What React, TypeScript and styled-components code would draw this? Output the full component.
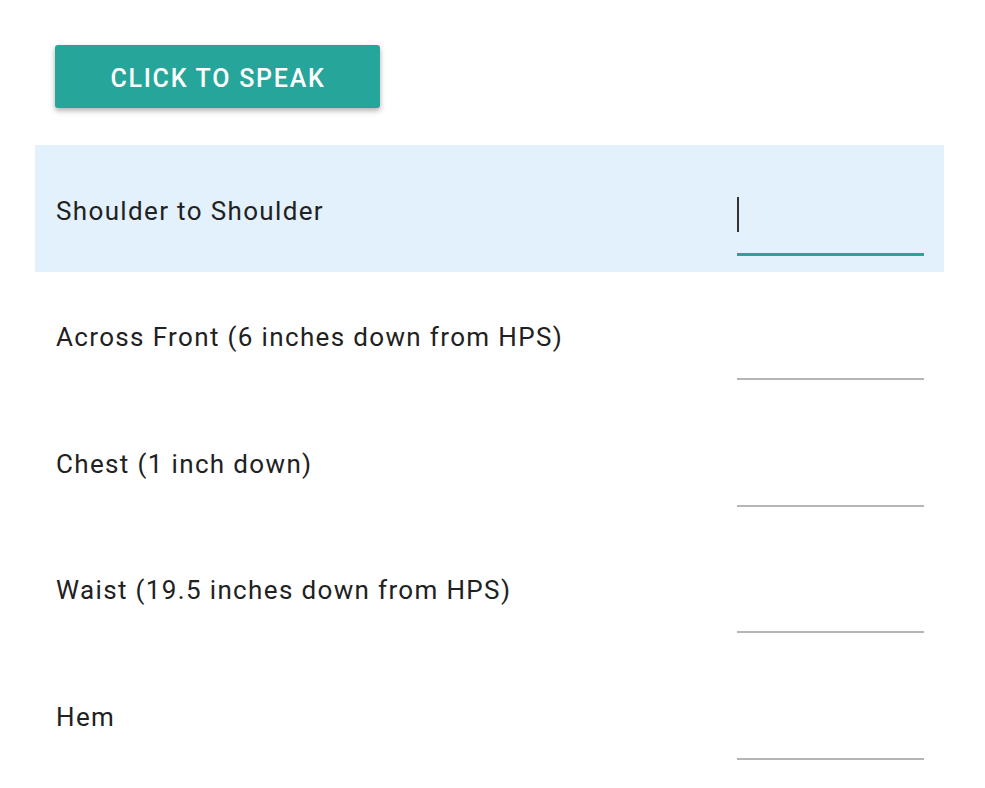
import styled, { createGlobalStyle } from "styled-components";

const GlobalStyle = createGlobalStyle`
  html, body {
    margin: 0;
    padding: 0;
    background: #ffffff;
    font-family: Roboto, "Noto Sans", sans-serif;
  }
`;

const measurements = [
  { label: "Shoulder to Shoulder", active: true },
  { label: "Across Front (6 inches down from HPS)", active: false },
  { label: "Chest (1 inch down)", active: false },
  { label: "Waist (19.5 inches down from HPS)", active: false },
  { label: "Hem", active: false },
];

const App = () => {
  return (
    <>
      <GlobalStyle />
      <Page>
        <Toolbar>
          <SpeakButton>Click to speak</SpeakButton>
        </Toolbar>
        <List>
          {measurements.map((m) => (
            <Row key={m.label} $active={m.active}>
              <Label>{m.label}</Label>
              <Field $active={m.active}>{m.active && <Caret />}</Field>
            </Row>
          ))}
        </List>
      </Page>
    </>
  );
};

export default App;

const Page = styled.div`
  padding: 45px 41px 0 35px;
  width: 909px;
`;

const Toolbar = styled.div`
  display: flex;
  padding-left: 20px;
  margin-bottom: 37px;
`;

const SpeakButton = styled.button`
  width: 325px;
  height: 63px;
  padding: 4px 0 0 1px;
  border: none;
  border-radius: 3px;
  background-color: #26a69a;
  color: #ffffff;
  font-family: Roboto, sans-serif;
  font-size: 25px;
  font-weight: 500;
  letter-spacing: 1.75px;
  text-transform: uppercase;
  box-shadow: 0 3px 6px rgba(0, 0, 0, 0.22), 0 2px 4px rgba(0, 0, 0, 0.12);
  cursor: pointer;
`;

const List = styled.div`
  display: flex;
  flex-direction: column;
`;

const Row = styled.div<{ $active: boolean }>`
  display: flex;
  justify-content: space-between;
  height: 126.5px;
  padding: 0 20px 0 21px;
  box-sizing: border-box;
  background-color: ${(p) => (p.$active ? "#e3f1fc" : "transparent")};
`;

const Label = styled.div`
  align-self: center;
  font-size: 26px;
  letter-spacing: 1.35px;
  color: #212121;
  margin-top: 5px;
`;

const Field = styled.div<{ $active: boolean }>`
  align-self: flex-end;
  width: 187px;
  height: 60px;
  box-sizing: border-box;
  margin-bottom: ${(p) => (p.$active ? "16px" : "18px")};
  border-bottom: ${(p) => (p.$active ? "3px solid #26a69a" : "2px solid #b5b5b5")};
  display: flex;
  align-items: flex-start;
  padding-top: 1px;
`;

const Caret = styled.span`
  display: block;
  width: 2px;
  height: 35px;
  background-color: #333333;
`;
